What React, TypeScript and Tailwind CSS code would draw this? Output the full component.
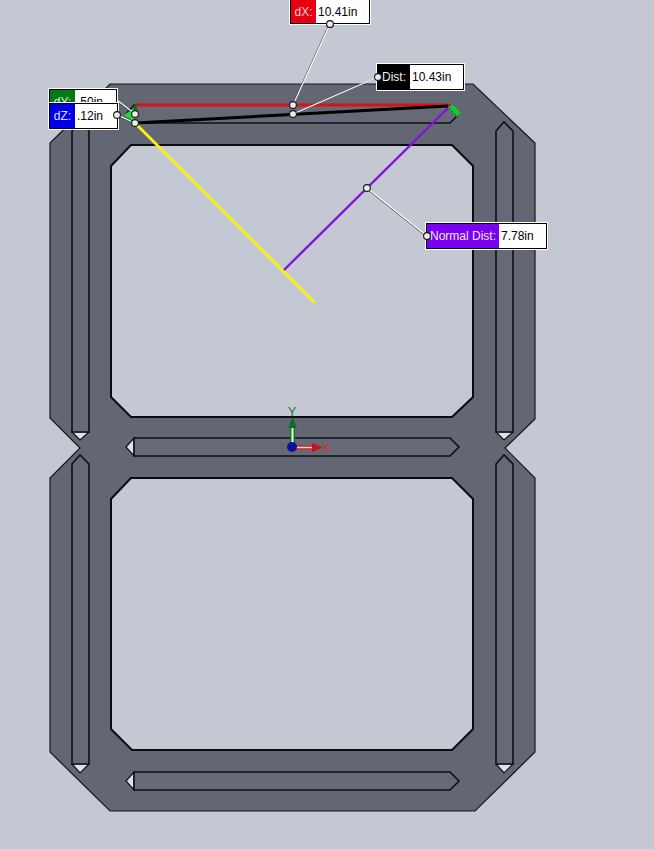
import React from 'react';

const FONT = 'font-["Liberation_Sans",Arial,sans-serif]';

interface CalloutProps {
  label: string;
  value: string;
  position: string;
  labelClass: string;
}

// dimension flag shown by the CAD viewer
const Callout: React.FC<CalloutProps> = ({ label, value, position, labelClass }) => (
  <div className={`absolute flex border border-black bg-white text-[12px] leading-none outline outline-1 outline-white ${FONT} ${position}`}>
    <div className={`flex items-center justify-center ${labelClass}`}>{label}</div>
    <div className="flex flex-1 items-center pl-[2px] text-black">{value}</div>
  </div>
);

const Handle = ({ x, y }: { x: number; y: number }) => (
  <circle cx={x} cy={y} r={3.4} fill="#ececec" stroke="#15161a" strokeWidth={1.1} />
);

const Leader = ({ d }: { d: string }) => (
  <>
    <path d={d} fill="none" stroke="#30323a" strokeWidth={1} transform="translate(-0.8 0.4)" />
    <path d={d} fill="none" stroke="#ffffff" strokeWidth={1.1} />
  </>
);

const OUTLINE =
  'M110 84H473L535 143V419L505 448L535 478V752L475 811H110L50 752V478L80 448L50 418V143Z';
const TOP_WINDOW = 'M131 145H452L473 166V397L452 417H131L111 397V166Z';
const BOTTOM_WINDOW = 'M131 478H452L473 499V729L452 750H132L111 729V499Z';

const VERTICAL_SLOTS = [
  'M72 131L80 122L89 131V432H72Z',
  'M72 464L80 455L89 464V764H72Z',
  'M496 131L504 122L513 131V432H496Z',
  'M496 464L504 455L513 464V764H496Z',
];
const SLOT_TIPS = [
  'M72 432H89L80 440Z',
  'M72 764H89L80 773Z',
  'M496 432H513L504 440Z',
  'M496 764H513L504 773Z',
  'M134 438V456L126 447Z',
  'M134 772V790L126 781Z',
];
const HORIZONTAL_SLOTS = [
  'M134 438H450L459 447L450 456H134Z',
  'M134 772H450L459 781L450 790H134Z',
  'M134 105H450L459 114L450 123H134L126 114Z',
];

export default function App() {
  return (
    <div className="relative h-[849px] w-[654px] overflow-hidden bg-[#c3c8d3]">
      <svg width={654} height={849} viewBox="0 0 654 849" className="absolute left-0 top-0">
        {/* part */}
        <path d={OUTLINE} fill="#636773" stroke="#14161c" strokeWidth={1.2} />
        <path d={TOP_WINDOW} fill="#c3c8d3" stroke="#0a0c10" strokeWidth={2} />
        <path d={BOTTOM_WINDOW} fill="#c3c8d3" stroke="#0a0c10" strokeWidth={2} />
        {SLOT_TIPS.map((d) => (
          <path key={d} d={d} fill="#dfe2e8" stroke="#0e1014" strokeWidth={1.2} />
        ))}
        {VERTICAL_SLOTS.map((d) => (
          <path key={d} d={d} fill="#666a76" stroke="#0e1014" strokeWidth={1.6} />
        ))}
        {HORIZONTAL_SLOTS.map((d) => (
          <path key={d} d={d} fill="#666a76" stroke="#0e1014" strokeWidth={1.6} />
        ))}

        {/* measure lines */}
        <path d="M135 123L315 303" stroke="#f5f01e" strokeWidth={3} />
        <path d="M284 270L450 106" stroke="#8a10d8" strokeWidth={2.4} />
        <path d="M135 105H450" stroke="#e00f14" strokeWidth={3} />
        <path d="M135 123L448 106" stroke="#000000" strokeWidth={3} />
        <path d="M450 106L459 115" stroke="#12c92a" strokeWidth={6} />
        <path d="M449 108L457 117" stroke="#0b4f18" strokeWidth={1} strokeDasharray="2 2" />
        <path d="M124 115L135 107L134 122Z" fill="#22d83a" />
        <path d="M132 108L137 103V112Z" fill="#0a6e1c" />

        {/* triad */}
        <path d="M292.5 443V426" stroke="#0c7a20" strokeWidth={5} />
        <path d="M292.5 443V427" stroke="#eefbe8" strokeWidth={2} />
        <path d="M292.5 417L297 428H288Z" fill="#126b24" />
        <path d="M296 447.5H315" stroke="#e01818" strokeWidth={4} />
        <path d="M296 447.5H315" stroke="#f4dada" strokeWidth={1.5} />
        <path d="M323 447.5L312 443V452Z" fill="#c81414" />
        <circle cx={292} cy={447} r={5} fill="#10109a" />
        <text x={292} y={416} textAnchor="middle" fontSize={13} fill="#1b7a3a" fontFamily="Liberation Sans, sans-serif">Y</text>
        <text x={326} y={452} textAnchor="middle" fontSize={13} fill="#d43030" fontFamily="Liberation Sans, sans-serif">X</text>

        {/* leaders */}
        <Leader d="M330 24L293 105" />
        <Leader d="M378 77L293 114" />
        <Leader d="M367 188L427 236" />
        <Leader d="M117 100L135 114" />
        <Leader d="M117 115L135 123" />
        <Handle x={330} y={24} />
        <Handle x={293} y={105} />
        <Handle x={293} y={114} />
        <Handle x={367} y={188} />
        <Handle x={135} y={114} />
        <Handle x={135} y={123} />
      </svg>

      <Callout
        label="dX:"
        value="10.41in"
        position="left-[290px] top-[-1px] h-[25px] w-[80px]"
        labelClass="w-[25px] bg-[#e60012] text-[#f0d0d0]"
      />
      <Callout
        label="Dist:"
        value="10.43in"
        position="left-[377px] top-[64px] h-[26px] w-[87px]"
        labelClass="w-[32px] bg-black text-[#f2f2f2]"
      />
      <Callout
        label="Normal Dist:"
        value="7.78in"
        position="left-[426px] top-[223px] h-[26px] w-[121px]"
        labelClass="w-[72px] bg-[#7a00f0] text-[#f0e6ff]"
      />
      <Callout
        label="dY:"
        value=".50in"
        position="left-[49px] top-[89px] h-[26px] w-[68px]"
        labelClass="w-[25px] bg-[#007a12] text-[#d0f0d0]"
      />
      <Callout
        label="dZ:"
        value=".12in"
        position="left-[49px] top-[103px] h-[26px] w-[69px]"
        labelClass="w-[25px] bg-[#0000e6] text-[#e0e0ff]"
      />

      {/* flag handles sit on top of the flags */}
      <svg width={654} height={849} viewBox="0 0 654 849" className="pointer-events-none absolute left-0 top-0">
        <Handle x={330} y={24} />
        <Handle x={378} y={77} />
        <Handle x={427} y={236} />
        <Handle x={117} y={115} />
      </svg>
    </div>
  );
}
